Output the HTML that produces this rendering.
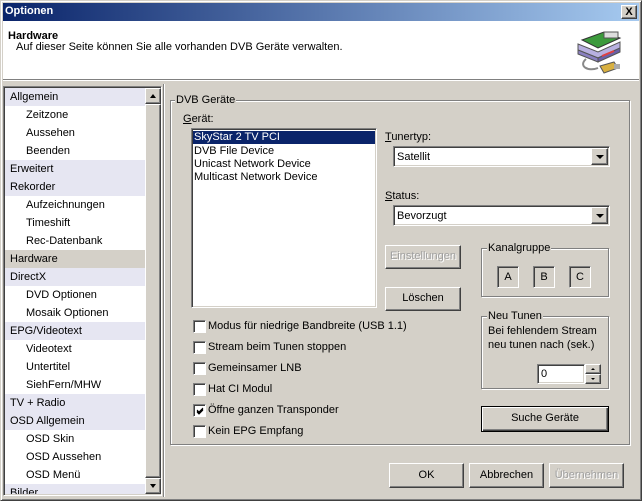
<!DOCTYPE html>
<html><head><meta charset="utf-8"><style>
*{margin:0;padding:0;box-sizing:border-box}
body{width:642px;height:501px;overflow:hidden;background:#d4d0c8;font-family:"Liberation Sans",Tahoma,sans-serif;font-size:11px;color:#000;position:relative}
.a{position:absolute}
.t{position:absolute;white-space:nowrap;line-height:13px}
.sunk{border:1px solid;border-color:#808080 #fff #fff #808080;box-shadow:inset 1px 1px 0 #404040,inset -1px -1px 0 #d4d0c8}
.raised{background:#d4d0c8;border:1px solid;border-color:#fff #404040 #404040 #fff;box-shadow:inset -1px -1px 0 #808080}
.btn{position:absolute;background:#d4d0c8;border:1px solid;border-color:#fff #404040 #404040 #fff;box-shadow:inset -1px -1px 0 #808080;text-align:center;line-height:21px}
.grp{position:absolute;border:1px solid #808080;box-shadow:1px 1px 0 #fff,inset 1px 1px 0 #fff}
.lg{position:absolute;background:#d4d0c8;padding:0 1px;line-height:13px;white-space:nowrap}
.dis{color:#a0a0a0;text-shadow:1px 1px 0 #fff}
.cb{position:absolute;width:13px;height:13px;background:#fff;border:1px solid;border-color:#808080 #fff #fff #808080;box-shadow:inset 1px 1px 0 #404040}
.row{position:absolute;left:0;width:140px;height:18px;line-height:18px;padding-left:5px;white-space:nowrap}
.top{background:#e6e6f2}
.sub{padding-left:21px;background:#fff}
.arr{width:0;height:0;border-left:3px solid transparent;border-right:3px solid transparent;position:absolute}
</style></head><body>
<div class="a" style="left:0;top:0;width:642px;height:501px;border:1px solid;border-color:#d4d0c8 #404040 #404040 #d4d0c8;box-shadow:inset 1px 1px 0 #fff,inset -1px -1px 0 #808080"></div>
<div class="a" style="left:3px;top:3px;width:636px;height:18px;background:linear-gradient(to right,#0a246a,#a6caf0)"></div>
<div class="t" style="left:5px;top:5px;color:#fff;font-weight:bold;font-size:11px">Optionen</div>
<div class="btn" style="left:621px;top:5px;width:16px;height:14px;line-height:12px;font-weight:bold;font-size:11px">X</div>
<div class="a" style="left:3px;top:21px;width:636px;height:58px;background:#fff"></div>
<div class="t" style="left:8px;top:30px;font-weight:bold">Hardware</div>
<div class="t" style="left:16px;top:41px">Auf dieser Seite können Sie alle vorhanden DVB Geräte verwalten.</div>
<svg class="a" style="left:574px;top:26px" width="52" height="52" viewBox="0 0 52 52">
<path d="M8 14 L30 6 L46 12 L24 22 Z" fill="#3c9a3c" stroke="#333" stroke-width="1"/>
<rect x="30" y="6" width="14" height="6" fill="#ddd" stroke="#555"/>
<path d="M4 18 L24 26 L46 16 L46 22 L24 32 L4 24 Z" fill="#b8b0e0" stroke="#555"/>
<path d="M4 24 L24 32 L24 36 L4 28 Z" fill="#8a80c0" stroke="#555"/>
<path d="M24 32 L46 22 L46 26 L24 36 Z" fill="#6a60a8" stroke="#555"/>
<path d="M28 30 L40 25" stroke="#e04040" stroke-width="2"/>
<path d="M12 33 C4 40 14 46 24 42" fill="none" stroke="#888" stroke-width="2"/>
<path d="M26 40 L40 36 L44 42 L30 47 Z" fill="#d8b040" stroke="#555"/>
<rect x="40" y="38" width="6" height="5" fill="#aaa"/>
</svg>
<div class="a" style="left:3px;top:79px;width:636px;height:1px;background:#808080"></div>
<div class="a" style="left:3px;top:80px;width:636px;height:1px;background:#fff"></div>
<div class="a sunk" style="left:3px;top:86px;width:159px;height:410px;background:#fff;overflow:hidden">
<div class="a" style="left:1px;top:1px;width:140px;height:406px;overflow:hidden">
<div class="row top" style="top:0">Allgemein</div>
<div class="row sub" style="top:18px">Zeitzone</div>
<div class="row sub" style="top:36px">Aussehen</div>
<div class="row sub" style="top:54px">Beenden</div>
<div class="row top" style="top:72px">Erweitert</div>
<div class="row top" style="top:90px">Rekorder</div>
<div class="row sub" style="top:108px">Aufzeichnungen</div>
<div class="row sub" style="top:126px">Timeshift</div>
<div class="row sub" style="top:144px">Rec-Datenbank</div>
<div class="row" style="top:162px;background:#d4d0c8">Hardware</div>
<div class="row top" style="top:180px">DirectX</div>
<div class="row sub" style="top:198px">DVD Optionen</div>
<div class="row sub" style="top:216px">Mosaik Optionen</div>
<div class="row top" style="top:234px">EPG/Videotext</div>
<div class="row sub" style="top:252px">Videotext</div>
<div class="row sub" style="top:270px">Untertitel</div>
<div class="row sub" style="top:288px">SiehFern/MHW</div>
<div class="row top" style="top:306px">TV + Radio</div>
<div class="row top" style="top:324px">OSD Allgemein</div>
<div class="row sub" style="top:342px">OSD Skin</div>
<div class="row sub" style="top:360px">OSD Aussehen</div>
<div class="row sub" style="top:378px">OSD Menü</div>
<div class="row top" style="top:396px">Bilder</div>
</div>
<div class="a" style="left:141px;top:1px;width:16px;height:406px;background:#e8e6e0"></div>
<div class="a raised" style="left:141px;top:1px;width:16px;height:16px"><div class="arr" style="left:4px;top:5px;border-bottom:4px solid #000"></div></div>
<div class="a raised" style="left:141px;top:17px;width:16px;height:374px"></div>
<div class="a raised" style="left:141px;top:391px;width:16px;height:16px"><div class="arr" style="left:4px;top:5px;border-top:4px solid #000"></div></div>
</div>
<div class="a" style="left:163px;top:84px;width:476px;height:413px;border-left:1px solid #808080;box-shadow:inset 1px 0 0 #fff"></div>
<div class="grp" style="left:170px;top:100px;width:460px;height:345px"></div>
<div class="lg" style="left:175px;top:94px">DVB Geräte</div>
<div class="t" style="left:183px;top:113px"><u>G</u>erät:</div>
<div class="a sunk" style="left:191px;top:128px;width:186px;height:180px;background:#fff"></div>
<div class="a" style="left:193px;top:131px;width:182px;height:13px;background:#0a246a"></div>
<div class="t" style="left:194px;top:131px;color:#fff">SkyStar 2 TV PCI</div>
<div class="t" style="left:194px;top:145px">DVB File Device</div>
<div class="t" style="left:194px;top:158px">Unicast Network Device</div>
<div class="t" style="left:194px;top:171px">Multicast Network Device</div>
<div class="t" style="left:385px;top:131px"><u>T</u>unertyp:</div>
<div class="a sunk" style="left:393px;top:146px;width:217px;height:21px;background:#fff"></div>
<div class="t" style="left:397px;top:151px">Satellit</div>
<div class="a raised" style="left:591px;top:148px;width:17px;height:17px"><div class="arr" style="left:4px;top:6px;border-left-width:4px;border-right-width:4px;border-top:4px solid #000"></div></div>
<div class="t" style="left:385px;top:190px"><u>S</u>tatus:</div>
<div class="a sunk" style="left:393px;top:205px;width:217px;height:21px;background:#fff"></div>
<div class="t" style="left:397px;top:210px">Bevorzugt</div>
<div class="a raised" style="left:591px;top:207px;width:17px;height:17px"><div class="arr" style="left:4px;top:6px;border-left-width:4px;border-right-width:4px;border-top:4px solid #000"></div></div>
<div class="btn dis" style="left:385px;top:245px;width:76px;height:24px">Einstellungen</div>
<div class="btn" style="left:385px;top:287px;width:76px;height:24px">Löschen</div>
<div class="grp" style="left:481px;top:248px;width:128px;height:49px"></div>
<div class="lg" style="left:487px;top:242px">Kanalgruppe</div>
<div class="a sunk" style="left:497px;top:266px;width:22px;height:22px;text-align:center;line-height:20px">A</div>
<div class="a sunk" style="left:533px;top:266px;width:22px;height:22px;text-align:center;line-height:20px">B</div>
<div class="a sunk" style="left:569px;top:266px;width:22px;height:22px;text-align:center;line-height:20px">C</div>
<div class="grp" style="left:481px;top:316px;width:128px;height:73px"></div>
<div class="lg" style="left:487px;top:310px">Neu Tunen</div>
<div class="t" style="left:488px;top:325px">Bei fehlendem Stream</div>
<div class="t" style="left:488px;top:339px">neu tunen nach (sek.)</div>
<div class="a sunk" style="left:537px;top:364px;width:48px;height:20px;background:#fff;padding:3px 0 0 3px;line-height:13px">0</div>
<div class="a raised" style="left:585px;top:364px;width:16px;height:10px"><div class="arr" style="left:5px;top:3px;border-left-width:2px;border-right-width:2px;border-bottom:2px solid #000"></div></div>
<div class="a raised" style="left:585px;top:374px;width:16px;height:10px"><div class="arr" style="left:5px;top:3px;border-left-width:2px;border-right-width:2px;border-top:2px solid #000"></div></div>
<div class="btn" style="left:481px;top:406px;width:128px;height:26px;border:1px solid #000;box-shadow:inset 1px 1px 0 #fff,inset -1px -1px 0 #404040,inset -2px -2px 0 #808080;line-height:23px">Suche Geräte</div>
<div class="cb" style="left:193px;top:320px"></div><div class="t" style="left:208px;top:320px">Modus für niedrige Bandbreite (USB 1.1)</div>
<div class="cb" style="left:193px;top:341px"></div><div class="t" style="left:208px;top:341px">Stream beim Tunen stoppen</div>
<div class="cb" style="left:193px;top:362px"></div><div class="t" style="left:208px;top:362px">Gemeinsamer LNB</div>
<div class="cb" style="left:193px;top:383px"></div><div class="t" style="left:208px;top:383px">Hat CI Modul</div>
<div class="cb" style="left:193px;top:404px"><svg width="11" height="11" style="position:absolute;left:1px;top:1px"><path d="M2 5 L4 7 L8 3 M2 6 L4 8 L8 4 M2 4 L4 6 L8 2" stroke="#000" fill="none"/></svg></div><div class="t" style="left:208px;top:404px">Öffne ganzen Transponder</div>
<div class="cb" style="left:193px;top:425px"></div><div class="t" style="left:208px;top:425px">Kein EPG Empfang</div>
<div class="btn" style="left:389px;top:463px;width:75px;height:25px;line-height:23px">OK</div>
<div class="btn" style="left:469px;top:463px;width:75px;height:25px;line-height:23px">Abbrechen</div>
<div class="btn dis" style="left:549px;top:463px;width:75px;height:25px;line-height:23px">Übernehmen</div>
</body></html>
